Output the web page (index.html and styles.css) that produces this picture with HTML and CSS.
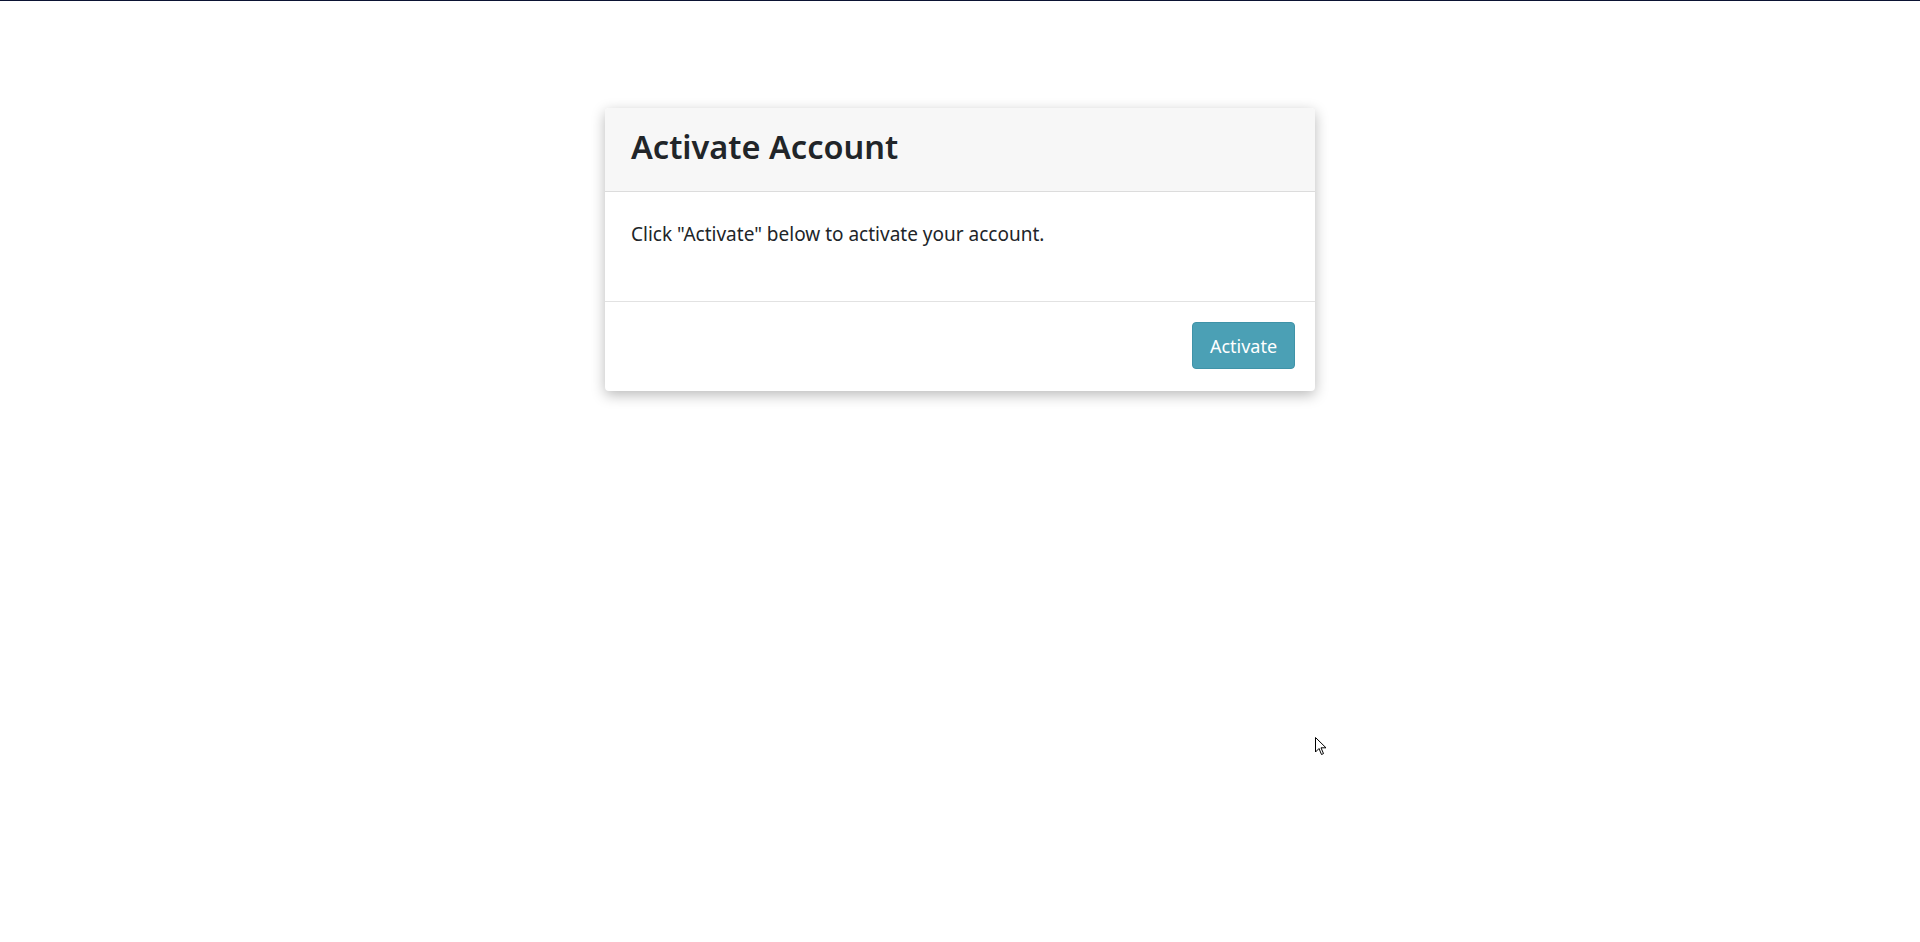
FILE: index.html
```html
<!DOCTYPE html>
<html>
<head>
<meta charset="utf-8">
<link rel="stylesheet" href="styles.css">
</head>
<body>
<div class="topline"></div>
<main class="page">
  <section class="card">
    <header class="card-header"><h1>Activate Account</h1></header>
    <div class="card-body"><p>Click "Activate" below to activate your account.</p></div>
    <footer class="card-footer"><button class="btn">Activate</button></footer>
  </section>
</main>
<svg class="cursor" width="12" height="19" viewBox="0 0 12 19"><path d="M0.5 0.5 L0.5 15 L4 11.5 L6.5 17.5 L8.5 16.6 L6 10.8 L11 10.8 Z" fill="#fff" stroke="#000" stroke-width="1"/></svg>
</body>
</html>
```
FILE: styles.css
```css
html, body { margin: 0; padding: 0; background: #fff; }
body { font-family: "Noto Sans", "Open Sans", sans-serif; color: #212529; height: 942px; position: relative; overflow: hidden; }
.topline { height: 1px; background: #0b1333; }
.page { display: flex; justify-content: center; padding-top: 107px; }
.card { width: 710px; border-radius: 4px; background: #fff; box-shadow: 0 4px 14px rgba(0,0,0,0.28); overflow: hidden; }
.card-header { background: #f7f7f7; height: 83px; box-sizing: border-box; border-bottom: 1px solid #dcdcdc; padding: 23px 26px 0; height: 84px; }
.card-header h1 { margin: 0; font-size: 32.5px; font-weight: 600; line-height: 1; }
.card-body { height: 110px; box-sizing: border-box; border-bottom: 1px solid #e2e2e2; padding: 0 26px; }
.card-body p { margin: 0; padding-top: 30px; font-size: 19px; line-height: 24px; }
.card-footer { height: 89px; display: flex; justify-content: flex-end; align-items: flex-start; padding: 20px 20px 0; box-sizing: border-box; }
.btn { width: 103px; height: 47px; border: 1px solid #3f93a8; border-radius: 4px; background: #4ba0b5; color: #fff; font-family: inherit; font-size: 18px; padding: 0; }
.cursor { position: absolute; left: 1315px; top: 737px; }
```
